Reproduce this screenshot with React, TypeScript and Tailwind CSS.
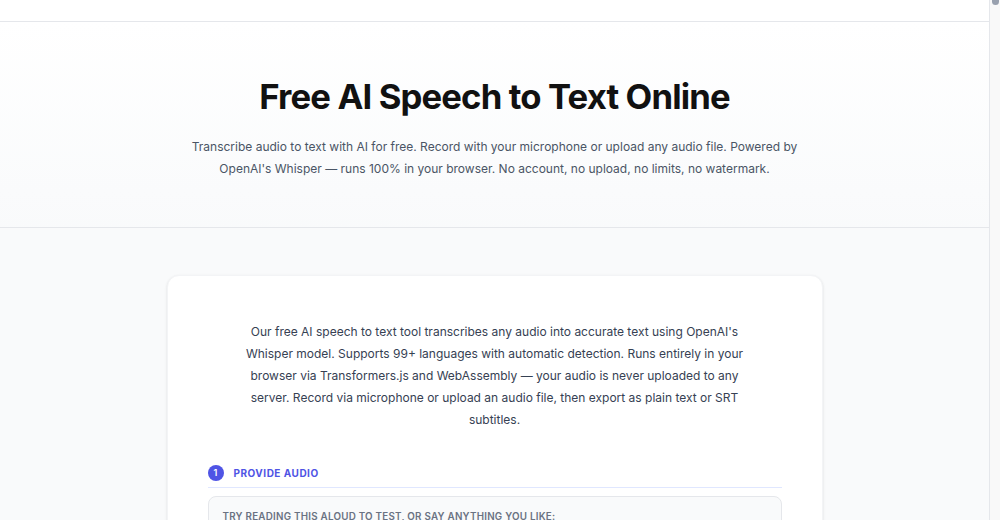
import React from "react"

const font = { fontFamily: "Inter, 'Noto Sans', sans-serif" }

function Scrollbar() {
  return (
    <div className="w-[11px] shrink-0 border-l border-gray-200 bg-[#f9f9f9]">
      <div className="mx-auto h-[5px] w-[7px] rounded-b-sm bg-gray-400" />
    </div>
  )
}

export default function App() {
  return (
    <div className="flex h-[520px] overflow-hidden" style={font}>
      <div className="min-w-0 flex-1 bg-gray-50 text-gray-900">
        <header className="h-[22px] border-b border-gray-200 bg-white" />

        <section className="border-b border-gray-200 bg-gradient-to-b from-white to-gray-50 pt-[52px] pb-[47px] text-center">
          <h1 className="text-[34.7px] leading-[44px] font-bold tracking-tight text-[#111]">
            Free AI Speech to Text Online
          </h1>
          <p className="mx-auto mt-[18px] max-w-[630px] text-[12px] leading-[22px] text-gray-600">
            Transcribe audio to text with AI for free. Record with your microphone or upload any
            audio file. Powered by OpenAI's Whisper — runs 100% in your browser. No account, no
            upload, no limits, no watermark.
          </p>
        </section>

        <main className="pt-[47px] pb-12">
          <div className="mx-auto w-[656px] rounded-xl border border-gray-100 bg-white px-10 pt-[45px] pb-10 shadow-sm">
            <p className="mx-auto max-w-[505px] text-center text-[12px] leading-[22px] text-gray-700">
              Our free AI speech to text tool transcribes any audio into accurate text using
              OpenAI's Whisper model. Supports 99+ languages with automatic detection. Runs entirely
              in your browser via Transformers.js and WebAssembly — your audio is never uploaded to
              any server. Record via microphone or upload an audio file, then export as plain text
              or SRT subtitles.
            </p>

            <div className="mt-[34px] flex items-center gap-2.5 border-b border-indigo-100 pb-[6px]">
              <span className="flex h-4 w-4 items-center justify-center rounded-full bg-[#4f54e5] text-[9px] font-semibold text-white">
                1
              </span>
              <span className="text-[10px] font-bold uppercase tracking-wider text-[#4f54e5]">
                Provide audio
              </span>
            </div>

            <div className="mt-[8px] rounded-lg border border-gray-200 bg-gray-50 px-[14px] py-[12px]">
              <p className="text-[9.8px] leading-4 font-semibold uppercase tracking-wide text-gray-500">
                Try reading this aloud to test, or say anything you like:
              </p>
              <p className="mt-3 text-[12px] leading-[22px] text-gray-700">
                The quick brown fox jumps over the lazy dog. Speech recognition turns spoken words
                into written text in seconds.
              </p>
            </div>
          </div>
        </main>
      </div>
      <Scrollbar />
    </div>
  )
}
